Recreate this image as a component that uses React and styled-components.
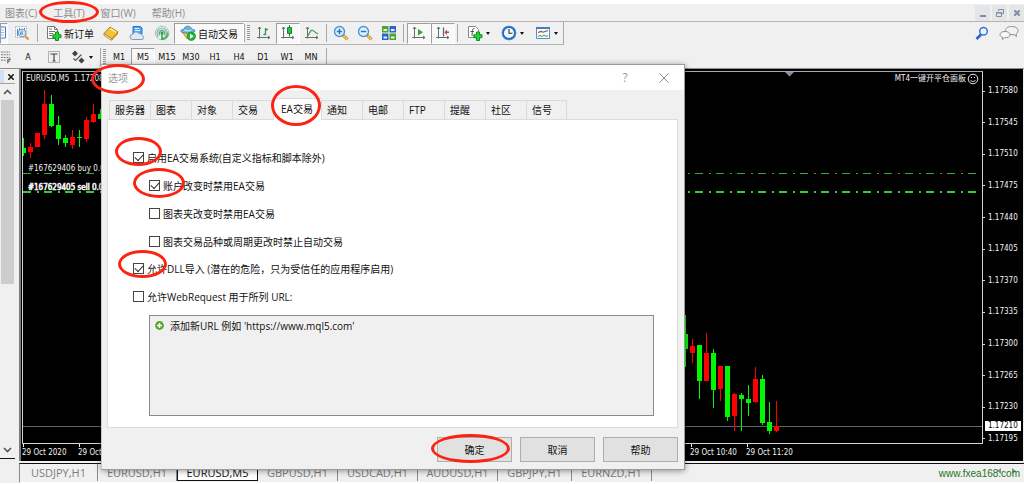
import React, {useState} from 'react';
import styled, {createGlobalStyle, css} from 'styled-components';

const GlobalStyle = createGlobalStyle`
    * {
        box-sizing: border-box;
    }

    body {
        margin: 0;
        background: #fff;
        color: #111;
        font-family: "Open Sans", "Noto Sans CJK SC", sans-serif;
        font-size: 10px;
    }

    button, input {
        margin: 0;
        padding: 0;
        font: inherit;
        color: inherit;
    }
`;

const tahoma = '"DejaVu Sans Condensed", "DejaVu Sans", "Noto Sans CJK SC", sans-serif';

/* ---------- shell ---------- */

const Shell = styled.div`
    position: relative;
    display: flex;
    flex-direction: column;
    min-height: 100vh;
    padding: 4px 0 3px;
    overflow: hidden;
`;

const MenuBar = styled.nav`
    display: flex;
    align-items: center;
    gap: 16px;
    height: 18px;
    padding-left: 5px;
    background: #f0f0f0;
    border-bottom: 1px solid #b4b4b4;
`;

const MenuItem = styled.button`
    position: relative;
    border: 0;
    background: none;
    color: #8c8c8c;
    line-height: 16px;
    white-space: nowrap;
`;

const WindowButtons = styled.div`
    display: flex;
    gap: 2px;
    margin-left: auto;
`;

const WindowButton = styled.button`
    display: flex;
    align-items: center;
    justify-content: center;
    width: 15px;
    height: 16px;
    border: 0;
    background: #e3e5e7;
`;

const Ring = styled.span`
    position: absolute;
    z-index: 2;
    top: ${p => p.$top}px;
    left: ${p => p.$left}px;
    width: ${p => p.$w}px;
    height: ${p => p.$h}px;
    border: 3px solid #fb2413;
    border-radius: 50%;
    pointer-events: none;
`;

/* ---------- toolbars ---------- */

const Toolbars = styled.header`
    display: flex;
    justify-content: space-between;
    background: #f0f0f0;
    border-bottom: 1px solid #8e8e8e;
    height: 47px;
`;

const ToolRow = styled.div`
    display: flex;
    align-items: center;
    width: max-content;
    height: ${p => p.$h}px;
    ${p => p.$framed && css`
        border-right: 1px solid #a8a8a8;
        border-bottom: 1px solid #b4b4b4;
    `}
`;

const Tool = styled.button`
    display: flex;
    flex: none;
    align-items: center;
    justify-content: center;
    gap: 2px;
    width: ${p => p.$w || 24}px;
    height: ${p => p.$h || 21}px;
    border: 1px solid transparent;
    background: none;
    font-size: ${p => p.$tiny ? 9 : 10}px;
    font-family: ${p => p.$tiny ? tahoma : 'inherit'};
    white-space: nowrap;
    ${p => p.$pressed && css`
        background: #f8f8f8;
        border-color: #9d9d9d #fff #fff #9d9d9d;
    `}
`;

const Divider = styled.i`
    flex: none;
    width: 1px;
    height: 18px;
    margin: 0 ${p => p.$r === undefined ? 3 : p.$r}px 0 ${p => p.$l === undefined ? 2 : p.$l}px;
    background: #a8a8a8;
`;

const Grip = styled.i`
    flex: none;
    width: 3px;
    height: 16px;
    margin: 0 ${p => p.$r || 3}px 0 2px;
    background: repeating-linear-gradient(#9a9a9a 0 1px, transparent 1px 2px);
`;

const Caret = styled.i`
    margin-left: 1px;
    border: 2px solid transparent;
    border-top: 3px solid #111;
    border-bottom: 0;
`;

const RightTools = styled.div`
    display: flex;
    gap: 3px;
    padding: 0 3px 0 0;
`;

/* ---------- workspace ---------- */

const Workspace = styled.div`
    display: flex;
    flex: 1;
    background: #f0f0f0;
`;

const SidePane = styled.aside`
    display: flex;
    flex-direction: column;
    width: 15px;
    margin: 1px 4px 0 0;
    padding-bottom: 24px;
`;

const PaneHead = styled.div`
    display: flex;
    align-items: center;
    justify-content: flex-end;
    height: 14px;
    padding-right: 1px;
    background: linear-gradient(90deg, #cfe2f5 4px, #f0f0f0 4px);
    border-bottom: 1px solid #a0a0a0;
`;

const ScrollButton = styled.button`
    display: flex;
    align-items: center;
    justify-content: center;
    height: 16px;
    border: 0;
    background: none;
`;

const ScrollTrack = styled.div`
    display: flex;
    flex: 1;
    flex-direction: column;
    background: #f0f0f0;
    border-bottom: 1px solid #111;
`;

const ScrollThumb = styled.div`
    height: 184px;
    margin: 0 1px auto;
    background: #cdcdcd;
`;

const Main = styled.div`
    display: flex;
    flex: 1;
    flex-direction: column;
    min-width: 0;
`;

const ChartWindow = styled.section`
    display: grid;
    flex: 1;
    grid-template-columns: 1fr 40px;
    grid-template-rows: 1fr 17px;
    margin-right: 1px;
    padding: 2px 0 0 1px;
    background: #000;
    border-left: 2px solid #7b7b7b;
    color: #f2f2f2;
    font-family: ${tahoma};
    font-size: 8px;
`;

const Plot = styled.div`
    position: relative;
    min-height: 373px;
    border: 1px solid #d4d4d4;
    border-top-color: #a9a9b4;

    svg {
        position: absolute;
        inset: 0;
        width: 100%;
        height: 100%;
        overflow: hidden;
    }
`;

const ChartCaption = styled.div`
    position: absolute;
    top: 1px;
    left: ${p => p.$right ? 'auto' : '3px'};
    right: ${p => p.$right ? '3px' : 'auto'};
    display: flex;
    align-items: center;
    gap: 1px;
    line-height: 12px;
    white-space: nowrap;

    svg {
        position: static;
        width: 12px;
        height: 12px;
    }
`;

const PriceAxis = styled.div`
    position: relative;
    display: flex;
    flex-direction: column;
    justify-content: space-between;
    padding: 15px 0 0;
`;

const Price = styled.span`
    display: flex;
    align-items: center;
    gap: 3px;
    line-height: 10px;

    &::before {
        content: '';
        width: 2px;
        height: 1px;
        background: #d4d4d4;
    }
`;

const LastPrice = styled.strong`
    position: absolute;
    left: 2px;
    right: 2px;
    bottom: 13px;
    padding-left: 3px;
    background: #fff;
    color: #000;
    font-weight: 400;
    line-height: 10px;
`;

const TimeAxis = styled.svg`
    grid-column: 1 / -1;
    width: 100%;
    height: 17px;
    fill: #f2f2f2;
`;

const SheetTabs = styled.div`
    position: relative;
    display: flex;
    height: 20px;
    margin-top: 2px;
    padding-bottom: 2px;
    border-top: 1px solid #111;
    border-left: 1px solid #8a8a8a;
    border-bottom: 1px solid #fff;
`;

const SheetTab = styled.button`
    width: ${p => p.$w || 80}px;
    height: 17px;
    border: 0;
    border-right: 1px solid #8a8a8a;
    background: none;
    color: #7d7d7d;
    font-size: 11px;
    line-height: 16px;
    ${p => p.$active && css`
        background: #fff;
        border: solid #111;
        border-width: 0 1px 1px;
        color: #111;
        line-height: 17px;
    `}
`;

const SheetScroll = styled.div`
    display: flex;
    gap: 11px;
    margin: 4px 8px 0 auto;
`;

const SiteLink = styled.a`
    position: absolute;
    right: 4px;
    bottom: 0;
    color: #1b751b;
    font-family: "Liberation Sans", sans-serif;
    font-size: 10px;
    line-height: 16px;
    text-decoration: none;
`;

/* ---------- dialog ---------- */

const Dialog = styled.form`
    position: absolute;
    z-index: 1;
    top: 64px;
    left: 101px;
    right: 339px;
    display: flex;
    flex-direction: column;
    background: #f0f0f0;
    border: 1px solid #9b9b9b;
    border-left-color: #c8c8c8;
    box-shadow: 0 1px 6px rgba(0, 0, 0, 0.4);
`;

const TitleBar = styled.div`
    position: relative;
    display: flex;
    align-items: center;
    height: 25px;
    padding: 0 12px 0 6px;
    background: #fff;
    color: #999;
`;

const Title = styled.h1`
    flex: 1;
    margin: 0;
    font-size: 10px;
    font-weight: 400;
`;

const TitleButton = styled.button`
    display: flex;
    align-items: center;
    justify-content: center;
    width: 16px;
    height: 16px;
    margin-left: ${p => p.$gap || 0}px;
    border: 0;
    background: none;
    font-size: 12px;
`;

const TabStrip = styled.div`
    display: flex;
    align-items: flex-end;
    height: 29px;
    padding-left: 7px;
`;

const Tab = styled.button`
    position: relative;
    width: ${p => p.$active ? 48 : 41}px;
    height: ${p => p.$active ? 22 : 19}px;
    padding: 0 0 ${p => p.$active ? 3 : 1}px ${p => p.$active ? 7 : 5}px;
    border: 1px solid #dadada;
    border-width: 1px 0 0 1px;
    background: ${p => p.$active ? '#fff' : '#f0f0f0'};
    text-align: left;
    white-space: nowrap;
    ${p => p.$active && css`
        margin-bottom: -1px;
    `}

    &:last-child {
        border-right-width: 1px;
    }
`;

const TabPanel = styled.div`
    display: flex;
    flex-direction: column;
    gap: 11px;
    margin: 0 6px 0 5px;
    padding: 29px 23px 11px 25px;
    background: #fff;
    border: 1px solid #dcdcdc;
`;

const Options = styled.div`
    display: flex;
    flex-direction: column;
    gap: 12px;
`;

const Option = styled.label`
    position: relative;
    display: flex;
    align-items: center;
    gap: 3px;
    width: max-content;
    height: 16px;
    margin-left: ${p => p.$nested ? 16 : 0}px;
`;

const Check = styled.input`
    display: grid;
    appearance: none;
    width: 11px;
    height: 11px;
    border: 1px solid #444;
    background: #fff;

    &:checked::before {
        content: '';
        width: 7px;
        height: 4px;
        margin: 1px 0 0 1px;
        border: solid #333;
        border-width: 0 0 1px 1px;
        transform: rotate(-47deg);
    }
`;

const UrlList = styled.ul`
    height: 101px;
    margin: 0 0 0 16px;
    padding: 1px 5px;
    list-style: none;
    background: #f0f0f0;
    border: 1px solid #868c96;
`;

const UrlRow = styled.li`
    display: flex;
    align-items: center;
    gap: 6px;
    height: 16px;
`;

const Actions = styled.div`
    display: flex;
    justify-content: flex-end;
    gap: 8px;
    padding: 9px 6px 7px;
`;

const Action = styled.button`
    position: relative;
    width: 75px;
    height: 25px;
    border: 1px solid #adadad;
    background: #e1e1e1;
`;

/* ---------- icons ---------- */

const Icon = ({w = 16, children}) => (
    <svg width={w} height="16" viewBox={`0 0 ${w} 16`} fill="none">{children}</svg>
);

const GridWindowIcon = () => (
    <Icon w={6}>
        <path d="M0 2h4.500v11H0" fill="#fff" stroke="#3c84d6"/>
        <path d="M0 5h3M0 7.500h3M0 10h3" stroke="#8fb9e8"/>
    </Icon>
);

const TesterIcon = () => (
    <Icon>
        <path d="M1.500 1.500h11v11h-11z" fill="#f4f6fa" stroke="#b7bcc6" strokeDasharray="2 1"/>
        <path d="M3.500 4v7M5.500 3v5M10.500 3v4" stroke="#5f86b8"/>
        <circle cx="8" cy="8" r="3.700" fill="#d5eafc" stroke="#7aa2cc" strokeWidth="1.200"/>
        <path d="M8 6v4M6.500 7.500v2" stroke="#4a76ad"/>
        <path d="M11 11l3.500 3.500" stroke="#d7a32a" strokeWidth="2.400"/>
    </Icon>
);

const Plus = () => (
    <path d="M9.500 7h3v2.700H15v3h-2.500V15.500h-3v-2.800H6.800v-3h2.700z" fill="#24d436" stroke="#068a15" strokeWidth=".9"/>
);

const NewOrderIcon = () => (
    <Icon>
        <path d="M1.500 1.500h7l3 3v9h-10z" fill="#fff" stroke="#777"/>
        <path d="M8.500 1.500v3h3" stroke="#777"/>
        <path d="M3 4h3M3 6.500h6M3 8.500h4M3 10.500h3" stroke="#777"/>
        <Plus/>
    </Icon>
);

const BookIcon = () => (
    <Icon>
        <path d="M1 8.500L7 2l8 5-6 7z" fill="#f3c23b" stroke="#a87412" strokeWidth=".9"/>
        <path d="M1 8.500v2l7.500 4.800.5-1.500z" fill="#fff3c5" stroke="#a87412" strokeWidth=".8"/>
        <path d="M7 3.500l6 3.700" stroke="#ffe694" strokeWidth="1.500"/>
        <path d="M9 13.800l6-6.800v1.700L9 15.300z" fill="#c48a14"/>
    </Icon>
);

const CloudIcon = () => (
    <Icon>
        <path d="M4 1.500h7.500L13 3v6H4z" fill="#52a8ef" stroke="#1c74c8"/>
        <path d="M6 3.500h4M6 5.500h5" stroke="#e6f4ff"/>
        <path d="M3.500 14.500a2.600 2.600 0 0 1 .3-5.200 3.400 3.400 0 0 1 6.200-.7 2.700 2.700 0 0 1 3.300 2 2 2 0 0 1-.5 3.900z" fill="#dfe9f6" stroke="#8197b8"/>
    </Icon>
);

const SignalIcon = () => (
    <Icon>
        <circle cx="8" cy="8" r="6.800" fill="#e2eef0" stroke="#a9c6c9"/>
        <path d="M4.200 11.500a5 5 0 1 1 7.600 0" stroke="#6fa7b5" strokeWidth="1.200"/>
        <path d="M6 10a2.700 2.700 0 1 1 4 0" stroke="#5ba76a" strokeWidth="1.200"/>
        <path d="M8 15c4.500 0 6.800-3.500 6.800-6.500L12.500 7c.3 3-1.500 5.500-4.500 6z" fill="#58b665"/>
        <path d="M8 8v7" stroke="#2e9b43" strokeWidth="1.400"/>
        <circle cx="8" cy="8" r="1.500" fill="#2e9b43"/>
    </Icon>
);

const AutoTradeIcon = () => (
    <Icon>
        <path d="M2 7l5 7 6-7z" fill="#f6c83e" stroke="#c08a15" strokeWidth=".7"/>
        <path d="M.7 6.300C1 4.500 3 4.300 4 4.300 4.500 1.800 6 1.200 7.800 1.200s3.400.8 3.700 3c1.500 0 3.300.5 3.600 1.800-1.500 2.700-12.500 3-14.400.3z" fill="#6fb4e2" stroke="#2f78aa" strokeWidth=".8"/>
        <path d="M4 5c2 1.200 5.500 1.200 7.500 0" stroke="#d7eefb"/>
        <circle cx="11.300" cy="11.300" r="4.200" fill="#22b33a" stroke="#0d8420" strokeWidth=".6"/>
        <path d="M10 8.800v5l3.700-2.500z" fill="#fff"/>
    </Icon>
);

const Axes = () => (
    <path d="M3.500 2v11.500M1 12.500h13M2 4l1.500-2L5 4M12 11l2 1.500-2 1.500" stroke="#6b6b6b" strokeWidth="1"/>
);

const BarIcon = () => (
    <Icon><Axes/><path d="M9.500 3v7M7.500 9.500h2M9.500 4.500h2.500" stroke="#2f9a45" strokeWidth="1.300"/></Icon>
);

const CandleIcon = () => (
    <Icon><Axes/><path d="M9.500 0v11.500" stroke="#188a2c"/><path d="M7.500 2.500h4v6h-4z" fill="#28c041" stroke="#188a2c"/></Icon>
);

const LineIcon = () => (
    <Icon><Axes/><path d="M4 11c2-5 3.500-6.500 5-5.500S11.500 8 14 9" stroke="#43a257" strokeWidth="1.200"/></Icon>
);

const ZoomIcon = ({plus}) => (
    <Icon>
        <path d="M10 10l4.500 4.500" stroke="#b98b1b" strokeWidth="3"/>
        <path d="M10.500 10.500l4 4" stroke="#f3d154" strokeWidth="1.500"/>
        <circle cx="6.500" cy="6.500" r="5" fill="#dff0fd" stroke="#4d94cf" strokeWidth="1.400"/>
        <path d={plus ? 'M3.800 6.500h5.400M6.500 3.800v5.400' : 'M3.800 6.500h5.400'} stroke="#2e78b8" strokeWidth="1.500"/>
    </Icon>
);

const TileIcon = () => (
    <Icon>
        <path d="M1 1h6.500v6.500H1zM8.500 8.500H15V15H8.500z" fill="#4aa52c"/>
        <path d="M8.500 1H15v6.500H8.500zM1 8.500h6.500V15H1z" fill="#2f62d0"/>
        <path d="M2.500 4h3.500v2H2.500zM10 4h3.500v2H10zM2.500 11.500h3.500v2H2.500zM10 11.500h3.500v2H10z" fill="#e8f3ff"/>
    </Icon>
);

const ScrollEndIcon = () => (
    <Icon><Axes/><path d="M7 4v6.500l5-3.200z" fill="#26a83d"/></Icon>
);

const ShiftIcon = () => (
    <Icon><Axes/><path d="M8.500 2.500v9" stroke="#3f6f98" strokeWidth="1.300"/><path d="M9.500 7.200L12 4.500v2h2v1.400h-2v2z" fill="#c8462b"/></Icon>
);

const IndicatorIcon = () => (
    <Icon>
        <path d="M1.500 1.500h7l3 3v8h-10z" fill="#fff" stroke="#888"/>
        <path d="M7.500 3.500C5 3 5.500 6 5 11M3.500 6.500h3.500" stroke="#555"/>
        <Plus/>
    </Icon>
);

const ClockIcon = () => (
    <Icon>
        <circle cx="8" cy="8" r="6.200" fill="#eef6fe" stroke="#1f66bd" strokeWidth="2.200"/>
        <circle cx="8" cy="8" r="6.800" stroke="#5ea5ea" strokeWidth=".6"/>
        <path d="M8 4v4.300h3.500" stroke="#333" strokeWidth="1.100"/>
    </Icon>
);

const TemplateIcon = () => (
    <Icon>
        <path d="M1.500 2.500h13v11h-13z" fill="#f7fbff" stroke="#5b8fc7"/>
        <path d="M1 3h14" stroke="#3f7fca" strokeWidth="2"/>
        <path d="M3 7.500l3-1 2 .7 5-1.700" stroke="#a8452e" strokeWidth="1.200"/>
        <path d="M3 11.500l2-1 2 1 2-1.500 2 1.500 2-1" stroke="#3e9b4d"/>
    </Icon>
);

const SearchIcon = () => (
    <Icon>
        <path d="M7 9.500L2.500 14" stroke="#2a63cf" strokeWidth="2.600"/>
        <circle cx="9.500" cy="6.200" r="3.800" fill="#eaf3ff" stroke="#3a74dc" strokeWidth="1.500"/>
    </Icon>
);

const ChatIcon = () => (
    <Icon w={20}>
        <path d="M12.500 1.500c4 0 6.500 1.700 6.500 4 0 1.500-.8 2.600-2 3.300l.5 2.700-2.700-2c-5 .6-8.300-1-8.300-4 0-2.300 2.500-4 6-4z" fill="#f3f3f3" stroke="#8d8d8d"/>
        <path d="M6 6.500c3 0 5 1.300 5 3.200 0 2-2.500 3.300-5.500 3L3.500 14.500 3.300 12C2 11.500 1 10.700 1 9.600c0-1.800 2-3.100 5-3.100z" fill="#fafafa" stroke="#8d8d8d"/>
    </Icon>
);

const FiboIcon = () => (
    <Icon w={11}>
        <path d="M0 2.500h10M0 5.500h10M0 8.500h10M0 11.500h6" stroke="#666" strokeDasharray="2 1"/>
        <path d="M7.500 15v-4.500H11M7.500 12.500H10" stroke="#444"/>
    </Icon>
);

const TextLabelIcon = () => (
    <Icon>
        <path d="M2.500 2.500h11v11h-11z" stroke="#777" strokeDasharray="1 1"/>
        <path d="M4.500 5h7M8 5v7M6.500 12h3" stroke="#444" strokeWidth="1.200"/>
    </Icon>
);

const ArrowsIcon = () => (
    <Icon>
        <path d="M2 4.500L5 1.500l3 3-3 3zM8.500 11.500l3-3 3 3-3 3z" fill="#444"/>
        <path d="M3.500 9.500l2 2 6-6" stroke="#555" strokeWidth="1.200"/>
    </Icon>
);

const Chevron = ({down}) => (
    <svg width="9" height="6" viewBox="0 0 9 6" fill="none">
        <path d={down ? 'M1 1l3.500 3.500L8 1' : 'M1 5l3.500-3.500L8 5'} stroke="#555" strokeWidth="1.600"/>
    </svg>
);

const Cross = ({size = 6, color = '#111', weight = 1.5}) => (
    <svg width={size} height={size} viewBox="0 0 10 10" fill="none">
        <path d="M.5.5l9 9M9.500.5l-9 9" stroke={color} strokeWidth={weight * 10 / size}/>
    </svg>
);

const SmileIcon = () => (
    <svg viewBox="0 0 12 12" fill="none" stroke="#eee">
        <circle cx="6" cy="6" r="4.800"/>
        <path d="M3.500 7c1 2 4 2 5 0M4 4.500h1M7 4.500h1"/>
    </svg>
);

const AddIcon = () => (
    <svg width="9" height="9" viewBox="0 0 9 9">
        <circle cx="4.500" cy="4.500" r="4.400" fill="#4faa2c"/>
        <path d="M4.500 2v5M2 4.500h5" stroke="#fff" strokeWidth="1.600"/>
    </svg>
);

const SheetArrow = ({right}) => (
    <svg width="4" height="6" viewBox="0 0 4 6" fill="#8a8a8a">
        <path d={right ? 'M0 0l4 3-4 3z' : 'M4 0L0 3l4 3z'}/>
    </svg>
);

/* ---------- data ---------- */

const UP = '#ff0000';
const DOWN = '#00f800';

// x, high, low, body top, body bottom, colour
const candles = [
    [0, 66, 84, 76, 81, DOWN],
    [7, 71, 86, 75, 80, UP],
    [14, 61, 75, 61, 75, UP],
    [21, 18, 67, 32, 63, UP],
    [28, 23, 55, 32, 54, DOWN],
    [35, 44, 73, 53, 67, DOWN],
    [42, 63, 75, 66, 71, DOWN],
    [49, 58, 77, 65, 73, UP],
    [56, 58, 75, 65, 66, DOWN],
    [63, 45, 70, 48, 67, UP],
    [70, 32, 51, 42, 50, UP],
    [77, 37, 47, 42, 47, DOWN],
    [662, 243, 295, 262, 277, DOWN],
    [669, 267, 291, 274, 281, UP],
    [676, 273, 327, 273, 309, DOWN],
    [683, 261, 309, 281, 309, UP],
    [690, 277, 336, 281, 318, DOWN],
    [697, 294, 329, 294, 317, UP],
    [704, 294, 349, 294, 345, DOWN],
    [711, 321, 359, 322, 344, UP],
    [718, 321, 359, 323, 327, DOWN],
    [725, 313, 344, 327, 331, DOWN],
    [732, 295, 331, 307, 330, UP],
    [739, 303, 353, 307, 351, DOWN],
    [746, 330, 362, 350, 359, DOWN],
    [753, 329, 360, 354, 359, UP]
];

const prices = ['1.17580', '1.17545', '1.17510', '1.17475', '1.17440', '1.17405',
    '1.17370', '1.17335', '1.17300', '1.17265', '1.17230', '1.17195'];

const times = [
    [0, '29 Oct 2020'],
    [56, '29 Oct 03:20'],
    [668, '29 Oct 10:40'],
    [724, '29 Oct 11:20']
];

const frames = ['M1', 'M5', 'M15', 'M30', 'H1', 'H4', 'D1', 'W1', 'MN'];

const sheets = [
    ['USDJPY,H1', 78], ['EURUSD,H1', 79], ['EURUSD,M5', 81], ['GBPUSD,H1', 80],
    ['USDCAD,H1', 80], ['AUDUSD,H1', 80], ['GBPJPY,H1', 74], ['EURNZD,H1', 80]
];

const dialogTabs = ['服务器', '图表', '对象', '交易', 'EA交易', '通知', '电邮', 'FTP', '提醒', '社区', '信号'];

const eaOptions = [
    {text: '启用EA交易系统(自定义指标和脚本除外)', on: true, ring: [-12, -18, 47, 29]},
    {text: '账户改变时禁用EA交易', on: true, nested: true, ring: [-9, -16, 52, 30]},
    {text: '图表夹改变时禁用EA交易', nested: true},
    {text: '图表交易品种或周期更改时禁止自动交易', nested: true}
];

const importOptions = [
    {text: '允许DLL导入 (潜在的危险，只为受信任的应用程序启用)', on: true, ring: [-10, -15, 49, 28]},
    {text: '允许WebRequest 用于所列 URL:'}
];

/* ---------- parts ---------- */

const RingAt = ({at: [top, left, w, h]}) => <Ring $top={top} $left={left} $w={w} $h={h}/>;

const OptionRow = ({text, on, nested, ring}) => (
    <Option $nested={nested}>
        <Check type="checkbox" defaultChecked={on}/>
        {text}
        {ring && <RingAt at={ring}/>}
    </Option>
);

const Chart = () => (
    <ChartWindow>
        <Plot>
            <svg>
                <line x1="0" x2="100%" y1="101.500" y2="101.500" stroke="#2fae2f" strokeDasharray="8 6 2 5"/>
                <line x1="0" x2="100%" y1="120" y2="120" stroke="#32cd32" strokeWidth="2" strokeDasharray="8 6 2 5"/>
                <line x1="0" x2="100%" y1="354.500" y2="354.500" stroke="#5a6672"/>
                {candles.map(([x, high, low, top, bottom, color]) => (
                    <g key={x} fill={color}>
                        <rect x={x} y={high} width="1" height={low - high}/>
                        <rect x={x - 2} y={top} width="5" height={bottom - top}/>
                    </g>
                ))}
                <path d="M762 0h9l-4.500 4.500z" fill="#8890a0"/>
            </svg>
            <ChartCaption>EURUSD,M5&nbsp; 1.17208</ChartCaption>
            <ChartCaption $right>MT4一键开平仓面板<SmileIcon/></ChartCaption>
            <svg fill="#f2f2f2">
                <text x="5" y="99">#167629406 buy 0.01</text>
                <text x="5" y="118" stroke="#f2f2f2" strokeWidth=".6">#167629405 sell 0.01</text>
            </svg>
        </Plot>
        <PriceAxis>
            {prices.map(p => <Price key={p}>{p}</Price>)}
            <LastPrice>1.17210</LastPrice>
        </PriceAxis>
        <TimeAxis>
            {times.map(([x, label]) => (
                <g key={x}>
                    <rect x={x + 1} width="1" height="3"/>
                    <text x={x} y="11">{label}</text>
                </g>
            ))}
        </TimeAxis>
    </ChartWindow>
);

const OptionsDialog = () => {
    const [tab, setTab] = useState('EA交易');

    return (
        <Dialog onSubmit={e => e.preventDefault()}>
            <TitleBar>
                <Title>选项</Title>
                <TitleButton type="button">?</TitleButton>
                <TitleButton type="button" $gap={23} aria-label="关闭">
                    <Cross size={10} color="#8a8a8a" weight={1}/>
                </TitleButton>
                <RingAt at={[-1, -11, 54, 30]}/>
            </TitleBar>
            <TabStrip role="tablist">
                {dialogTabs.map(t => (
                    <Tab key={t} type="button" role="tab" $active={t === tab} onClick={() => setTab(t)}>
                        {t}
                        {t === 'EA交易' && <RingAt at={[-14, -3, 50, 41]}/>}
                    </Tab>
                ))}
            </TabStrip>
            <TabPanel>
                <Options>
                    {eaOptions.map(o => <OptionRow key={o.text} {...o}/>)}
                </Options>
                <Options>
                    {importOptions.map(o => <OptionRow key={o.text} {...o}/>)}
                </Options>
                <UrlList>
                    <UrlRow><AddIcon/>添加新URL 例如 'https://www.mql5.com'</UrlRow>
                </UrlList>
            </TabPanel>
            <Actions>
                <Action type="submit">确定<RingAt at={[-4, -7, 79, 29]}/></Action>
                <Action type="button">取消</Action>
                <Action type="button">帮助</Action>
            </Actions>
        </Dialog>
    );
};

const App = () => {
    const [frame, setFrame] = useState('M5');

    return (
        <Shell>
            <GlobalStyle/>
            <MenuBar>
                <MenuItem>图表(C)</MenuItem>
                <MenuItem>工具(T)<RingAt at={[-4, -14, 60, 22]}/></MenuItem>
                <MenuItem>窗口(W)</MenuItem>
                <MenuItem>帮助(H)</MenuItem>
                <WindowButtons>
                    <WindowButton aria-label="最小化">
                        <svg width="6" height="8"><path d="M0 6h6v2H0z" fill="#7d8fa3"/></svg>
                    </WindowButton>
                    <WindowButton aria-label="还原">
                        <svg width="8" height="8" fill="none" stroke="#7d8fa3"><path d="M2.500 2V.5h5v4H6M.5 3.500h5v4h-5zM.5 4h5"/></svg>
                    </WindowButton>
                    <WindowButton aria-label="关闭"><Cross size={6} color="#7d8fa3" weight={2}/></WindowButton>
                </WindowButtons>
            </MenuBar>
            <Toolbars>
                <div>
                    <ToolRow $h={23} $framed>
                        <Tool $w={8} $pressed aria-label="窗口"><GridWindowIcon/></Tool>
                        <Tool $w={28} aria-label="测试"><TesterIcon/></Tool>
                        <Divider $l={1} $r={6}/>
                        <Tool $w={52}><NewOrderIcon/>新订单</Tool>
                        <Tool $w={29} aria-label="编辑器"><BookIcon/></Tool>
                        <Tool aria-label="市场"><CloudIcon/></Tool>
                        <Tool $w={25} aria-label="信号"><SignalIcon/></Tool>
                        <Tool $w={70} $pressed><AutoTradeIcon/>自动交易</Tool>
                        <Divider $l={0} $r={0}/>
                        <Grip $r={2}/>
                        <Tool aria-label="柱状图"><BarIcon/></Tool>
                        <Tool $pressed aria-label="蜡烛图"><CandleIcon/></Tool>
                        <Tool aria-label="折线图"><LineIcon/></Tool>
                        <Divider $r={2}/>
                        <Tool aria-label="放大"><ZoomIcon plus/></Tool>
                        <Tool aria-label="缩小"><ZoomIcon/></Tool>
                        <Tool aria-label="平铺"><TileIcon/></Tool>
                        <Divider/>
                        <Tool $pressed aria-label="自动滚动"><ScrollEndIcon/></Tool>
                        <Tool $pressed aria-label="图表平移"><ShiftIcon/></Tool>
                        <Divider/>
                        <Tool $w={34} aria-label="指标"><IndicatorIcon/><Caret/></Tool>
                        <Tool $w={34} aria-label="周期"><ClockIcon/><Caret/></Tool>
                        <Tool $w={34} aria-label="模板"><TemplateIcon/><Caret/></Tool>
                    </ToolRow>
                    <ToolRow $h={24}>
                        <Tool $w={12} $h={19} aria-label="斐波那契"><FiboIcon/></Tool>
                        <Tool $w={32} $h={19} $tiny>A</Tool>
                        <Tool $w={19} $h={19} aria-label="文本标签"><TextLabelIcon/></Tool>
                        <Tool $w={36} $h={19} aria-label="箭头"><ArrowsIcon/><Caret/></Tool>
                        <Divider $l={1} $r={0}/>
                        <Grip $r={1}/>
                        {frames.map(f => (
                            <Tool key={f} $h={19} $tiny $pressed={f === frame} onClick={() => setFrame(f)}>{f}</Tool>
                        ))}
                        <Divider $l={3}/>
                    </ToolRow>
                </div>
                <RightTools>
                    <Tool aria-label="搜索"><SearchIcon/></Tool>
                    <Tool aria-label="聊天"><ChatIcon/></Tool>
                </RightTools>
            </Toolbars>
            <Workspace>
                <SidePane>
                    <PaneHead><Cross/></PaneHead>
                    <ScrollTrack>
                        <ScrollButton aria-label="向上"><Chevron/></ScrollButton>
                        <ScrollThumb/>
                        <ScrollButton aria-label="向下"><Chevron down/></ScrollButton>
                    </ScrollTrack>
                </SidePane>
                <Main>
                    <Chart/>
                    <SheetTabs>
                        {sheets.map(([name, w]) => (
                            <SheetTab key={name} $w={w} $active={name === 'EURUSD,M5'}>{name}</SheetTab>
                        ))}
                        <SheetScroll><SheetArrow/><SheetArrow right/></SheetScroll>
                        <SiteLink href="http://www.fxea168.com">www.fxea168.com</SiteLink>
                    </SheetTabs>
                </Main>
            </Workspace>
            <OptionsDialog/>
        </Shell>
    );
};

export default App;
